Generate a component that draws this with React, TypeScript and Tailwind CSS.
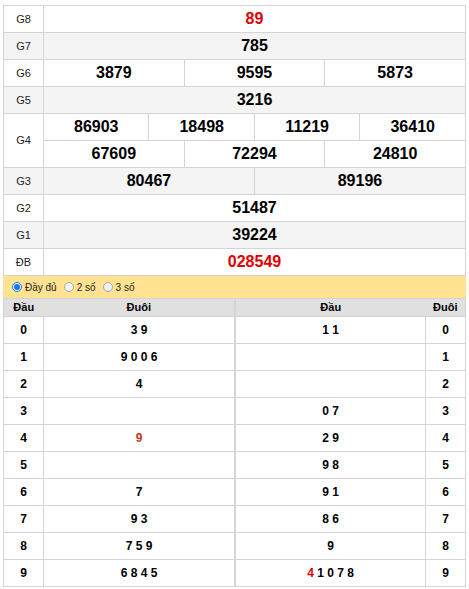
import React from 'react';

const font = { fontFamily: '"Liberation Sans", Arial, sans-serif' };

type Prize = { label: string; rows: string[][]; red?: boolean; gray?: boolean };

const prizes: Prize[] = [
  { label: 'G8', rows: [['89']], red: true },
  { label: 'G7', rows: [['785']], gray: true },
  { label: 'G6', rows: [['3879', '9595', '5873']] },
  { label: 'G5', rows: [['3216']], gray: true },
  { label: 'G4', rows: [['86903', '18498', '11219', '36410'], ['67609', '72294', '24810']] },
  { label: 'G3', rows: [['80467', '89196']], gray: true },
  { label: 'G2', rows: [['51487']] },
  { label: 'G1', rows: [['39224']], gray: true },
  { label: 'ĐB', rows: [['028549']], red: true },
];

const dau: React.ReactNode[] = [
  '3 9', '9 0 0 6', '4', '', <span className="text-[#c8361b]">9</span>, '', '7', '9 3', '7 5 9', '6 8 4 5',
];
const duoi: React.ReactNode[] = [
  '1 1', '', '', '0 7', '2 9', '9 8', '9 1', '8 6', '9',
  <span><span className="text-[#e00000]">4</span> 1 0 7 8</span>,
];

function PrizeTable() {
  return (
    <table className="w-[463px] table-fixed border-collapse border border-[#d4d4d4]">
      <colgroup>
        <col className="w-[40px]" />
        {Array.from({ length: 12 }).map((_, i) => (
          <col key={i} />
        ))}
      </colgroup>
      <tbody>
        {prizes.map((p) =>
          p.rows.map((r, ri) => (
            <tr key={p.label + ri} className={p.gray ? 'bg-[#f4f4f4]' : 'bg-white'}>
              {ri === 0 && (
                <td rowSpan={p.rows.length} className="border border-[#d4d4d4] text-center text-[11px] text-[#222]">
                  {p.label}
                </td>
              )}
              {r.map((n) => (
                <td
                  key={n}
                  colSpan={12 / r.length}
                  className={`h-[27px] border border-[#d4d4d4] text-center text-[16px] font-bold leading-none ${
                    p.red ? 'text-[#e00000]' : 'text-black'
                  }`}
                >
                  {n}
                </td>
              ))}
            </tr>
          ))
        )}
      </tbody>
    </table>
  );
}

function Radio({ checked, label }: { checked?: boolean; label: string }) {
  return (
    <label className="flex items-center gap-[3px]">
      <span
        className={`flex h-[10px] w-[10px] items-center justify-center rounded-full border ${
          checked ? 'border-[#1a73e8] bg-white' : 'border-[#aaa] bg-[#f0f0f0]'
        }`}
      >
        {checked && <span className="h-[6px] w-[6px] rounded-full bg-[#1a73e8]" />}
      </span>
      <span className="text-[10px] text-[#222]">{label}</span>
    </label>
  );
}

function LotoTable({ left }: { left: boolean }) {
  const data = left ? dau : duoi;
  const cell = 'h-[27px] border border-[#d4d4d4] text-center text-[12px] font-bold text-black';
  return (
    <table className="table-fixed border-collapse border border-[#d4d4d4]" style={{ width: left ? 232 : 231 }}>
      <colgroup>
        {left ? (
          <>
            <col className="w-[40px]" />
            <col />
          </>
        ) : (
          <>
            <col />
            <col className="w-[40px]" />
          </>
        )}
      </colgroup>
      <thead>
        <tr className="bg-[#e0e0e0]">
          <th className="h-[18px] text-center text-[11px] font-bold text-black">Đầu</th>
          <th className="h-[18px] text-center text-[11px] font-bold text-black">Đuôi</th>
        </tr>
      </thead>
      <tbody>
        {data.map((d, i) => (
          <tr key={i} className="bg-white">
            {left ? (
              <>
                <td className={cell}>{i}</td>
                <td className={cell}>{d}</td>
              </>
            ) : (
              <>
                <td className={cell}>{d}</td>
                <td className={cell}>{i}</td>
              </>
            )}
          </tr>
        ))}
      </tbody>
    </table>
  );
}

export default function App() {
  return (
    <div className="bg-white pl-[3px] pt-[5px]" style={font}>
      <PrizeTable />
      <div className="flex h-[22px] w-[463px] items-center gap-[7px] bg-[#ffe392] pl-[9px]">
        <Radio checked label="Đầy đủ" />
        <Radio label="2 số" />
        <Radio label="3 số" />
      </div>
      <div className="flex w-[463px]">
        <LotoTable left />
        <LotoTable left={false} />
      </div>
    </div>
  );
}
